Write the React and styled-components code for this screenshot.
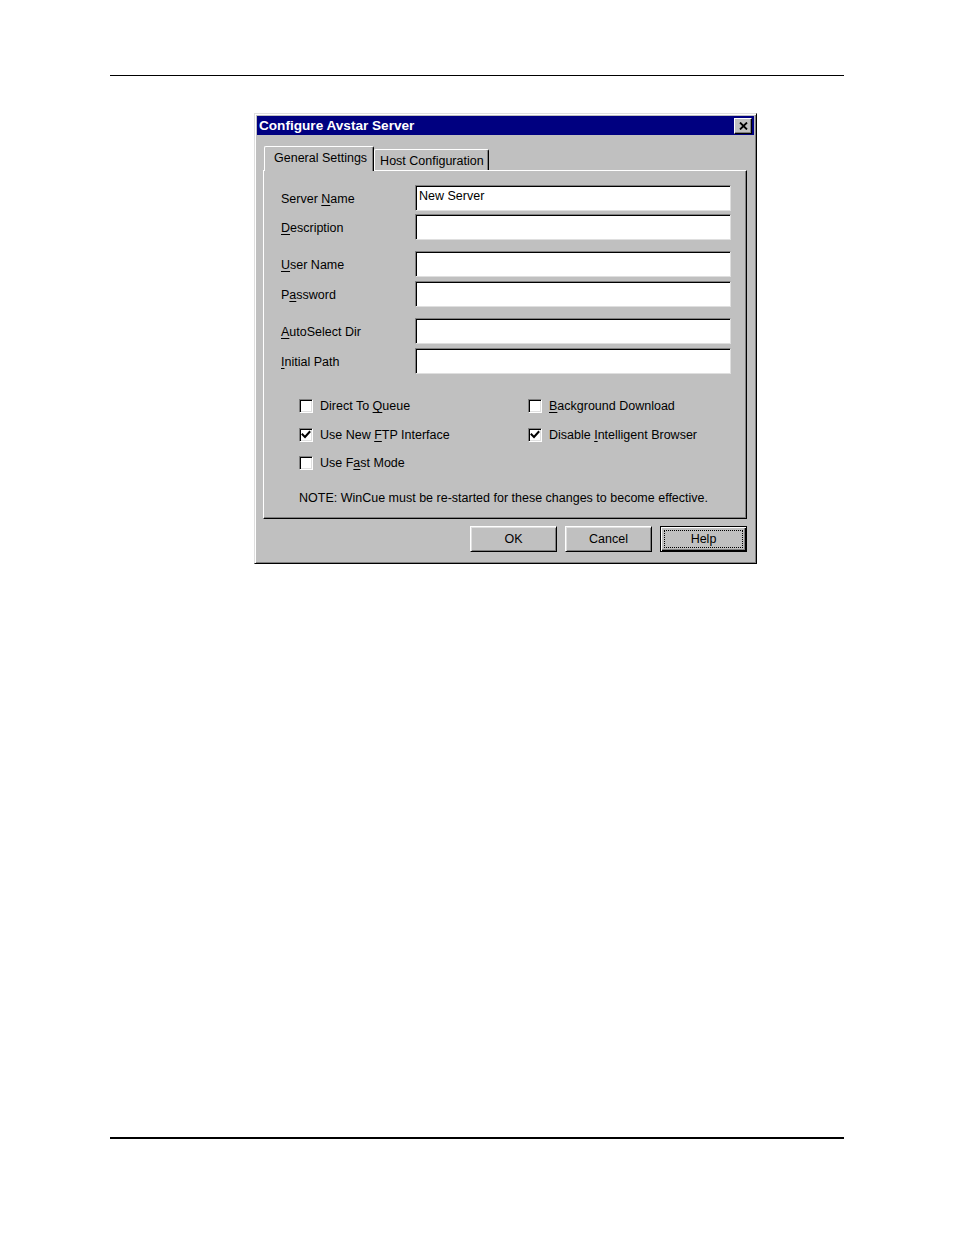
import React from "react";
import styled, { createGlobalStyle } from "styled-components";

const GlobalStyle = createGlobalStyle`
  body {
    margin: 0;
    background: #ffffff;
    font-family: "Liberation Sans", Arial, sans-serif;
    color: #000000;
  }
`;

const Mn = ({ children }) => <StyledMnemonic>{children}</StyledMnemonic>;

const fields = [
  [
    { label: <>Server <Mn>N</Mn>ame</>, value: "New Server" },
    { label: <><Mn>D</Mn>escription</>, value: "" },
  ],
  [
    { label: <><Mn>U</Mn>ser Name</>, value: "" },
    { label: <>P<Mn>a</Mn>ssword</>, value: "" },
  ],
  [
    { label: <><Mn>A</Mn>utoSelect Dir</>, value: "" },
    { label: <><Mn>I</Mn>nitial Path</>, value: "" },
  ],
];

const checks = [
  { label: <>Direct To <Mn>Q</Mn>ueue</>, checked: false },
  { label: <><Mn>B</Mn>ackground Download</>, checked: false },
  { label: <>Use New <Mn>F</Mn>TP Interface</>, checked: true },
  { label: <>Disable <Mn>I</Mn>ntelligent Browser</>, checked: true },
  { label: <>Use F<Mn>a</Mn>st Mode</>, checked: false },
];

const CheckBox = ({ checked }) => (
  <StyledBox>
    {checked && (
      <svg width="10" height="10" viewBox="0 0 10 10">
        <polyline
          points="1.5,4.5 4,7 8.5,2"
          fill="none"
          stroke="#000"
          strokeWidth="2"
          strokeLinecap="square"
        />
      </svg>
    )}
  </StyledBox>
);

const App = () => {
  return (
    <StyledPage>
      <GlobalStyle />
      <StyledTopRule />
      <StyledDialog>
        <StyledTitleBar>
          <span>Configure Avstar Server</span>
          <StyledClose>
            <svg width="9" height="8" viewBox="0 0 9 8">
              <path d="M1 0.5 L8 7.5 M8 0.5 L1 7.5" stroke="#000" strokeWidth="1.8" />
            </svg>
          </StyledClose>
        </StyledTitleBar>
        <StyledBody>
          <StyledTabRow>
            <StyledTab active>General Settings</StyledTab>
            <StyledTab>Host Configuration</StyledTab>
          </StyledTabRow>
          <StyledPanel>
            {fields.map((group, gi) => (
              <StyledGroup key={gi}>
                {group.map((f, fi) => (
                  <StyledField key={fi}>
                    <StyledLabel>{f.label}</StyledLabel>
                    <StyledInput>{f.value}</StyledInput>
                  </StyledField>
                ))}
              </StyledGroup>
            ))}
            <StyledChecks>
              {checks.map((c, i) => (
                <StyledCheckRow key={i}>
                  <CheckBox checked={c.checked} />
                  <span>{c.label}</span>
                </StyledCheckRow>
              ))}
            </StyledChecks>
            <StyledNote>
              NOTE: WinCue must be re-started for these changes to become effective.
            </StyledNote>
          </StyledPanel>
          <StyledButtons>
            <StyledButton>OK</StyledButton>
            <StyledButton>Cancel</StyledButton>
            <StyledButton isDefault>
              <StyledFocus>Help</StyledFocus>
            </StyledButton>
          </StyledButtons>
        </StyledBody>
      </StyledDialog>
      <StyledBottomRule />
    </StyledPage>
  );
};

export default App;

const StyledPage = styled.div`
  width: 954px;
  height: 1235px;
  display: flex;
  flex-direction: column;
  padding-top: 75px;
  box-sizing: border-box;
`;

const StyledTopRule = styled.div`
  margin: 0 110px;
  height: 1px;
  background: #000;
`;

const StyledBottomRule = styled.div`
  margin: auto 110px 96px;
  height: 2px;
  background: #000;
`;

const StyledDialog = styled.div`
  margin: 37px 0 0 254px;
  width: 503px;
  box-sizing: border-box;
  background: #c0c0c0;
  border: 1px solid;
  border-color: #dfdfdf #000 #000 #dfdfdf;
  box-shadow: inset 1px 1px #fff, inset -1px -1px #808080;
  padding: 2px 2px 11px;
  font-size: 12.5px;
`;

const StyledTitleBar = styled.div`
  height: 19px;
  background: #000080;
  color: #fff;
  font-weight: bold;
  font-size: 13.6px;
  display: flex;
  align-items: center;
  justify-content: space-between;
  padding: 0 2px 0 2px;
`;

const StyledClose = styled.div`
  width: 18px;
  height: 16px;
  box-sizing: border-box;
  background: #c0c0c0;
  border: 1px solid;
  border-color: #fff #000 #000 #fff;
  box-shadow: inset -1px -1px #808080;
  display: flex;
  align-items: center;
  justify-content: center;
`;

const StyledBody = styled.div`
  padding: 11px 7px 0 6px;
`;

const StyledTabRow = styled.div`
  height: 24px;
  display: flex;
  align-items: flex-end;
  padding-left: 1px;
  position: relative;
  z-index: 1;
`;

const StyledTab = styled.div`
  height: ${({ active }) => (active ? "25px" : "21px")};
  margin-bottom: ${({ active }) => (active ? "-1px" : "0")};
  padding: ${({ active }) => (active ? "0 6px 3px 9px" : "2px 4px 0 5px")};
  box-sizing: border-box;
  background: #c0c0c0;
  border: 1px solid;
  border-bottom: none;
  border-color: #fff #000 #000 #fff;
  border-radius: 2px 2px 0 0;
  box-shadow: inset -1px 0 #808080;
  display: flex;
  align-items: center;
  white-space: nowrap;
`;

const StyledPanel = styled.div`
  height: 349px;
  box-sizing: border-box;
  border: 1px solid;
  border-color: #fff #000 #000 #fff;
  box-shadow: inset -1px -1px #808080;
  padding: 14px 16px 0 17px;
`;

const StyledGroup = styled.div`
  display: flex;
  flex-direction: column;
  gap: 4px;
  margin-bottom: 11px;
  &:first-child {
    gap: 3px;
  }
  &:last-of-type {
    margin-bottom: 0;
  }
`;

const StyledField = styled.div`
  display: grid;
  grid-template-columns: 134px 316px;
  align-items: center;
`;

const StyledLabel = styled.span`
  padding-top: 1px;
`;

const StyledMnemonic = styled.span`
  text-decoration: underline;
  text-underline-offset: 2px;
`;

const StyledInput = styled.div`
  height: 26px;
  box-sizing: border-box;
  background: #fff;
  border: 1px solid;
  border-color: #808080 #dfdfdf #dfdfdf #808080;
  box-shadow: inset 1px 1px #000;
  padding: 0 3px 4px;
  display: flex;
  align-items: center;
`;

const StyledChecks = styled.div`
  display: grid;
  grid-template-columns: 229px 229px;
  grid-auto-rows: 28.5px;
  margin: 18px 0 0 18px;
`;

const StyledCheckRow = styled.div`
  display: flex;
  align-items: center;
  gap: 7px;
`;

const StyledBox = styled.div`
  width: 14px;
  height: 14px;
  box-sizing: border-box;
  background: #fff;
  border: 1px solid;
  border-color: #808080 #fff #fff #808080;
  box-shadow: inset 1px 1px #000, inset -1px -1px #dfdfdf;
  display: flex;
  align-items: center;
  justify-content: center;
`;

const StyledNote = styled.div`
  margin: 12px 0 0 18px;
  line-height: 16px;
`;

const StyledButtons = styled.div`
  display: flex;
  justify-content: flex-end;
  gap: 8px;
  padding: 7px 0 0 0;
`;

const StyledButton = styled.div`
  width: 87px;
  height: 26px;
  box-sizing: border-box;
  background: #c0c0c0;
  border: 1px solid;
  border-color: ${({ isDefault }) => (isDefault ? "#000" : "#fff #000 #000 #fff")};
  box-shadow: ${({ isDefault }) =>
    isDefault
      ? "inset 1px 1px #fff, inset -1px -1px #000, inset -2px -2px #808080"
      : "inset 1px 1px #dfdfdf, inset -1px -1px #808080"};
  display: flex;
  align-items: center;
  justify-content: center;
  padding: ${({ isDefault }) => (isDefault ? "3px" : "0")};
`;

const StyledFocus = styled.div`
  flex: 1;
  align-self: stretch;
  border: 1px dotted #000;
  display: flex;
  align-items: center;
  justify-content: center;
`;
